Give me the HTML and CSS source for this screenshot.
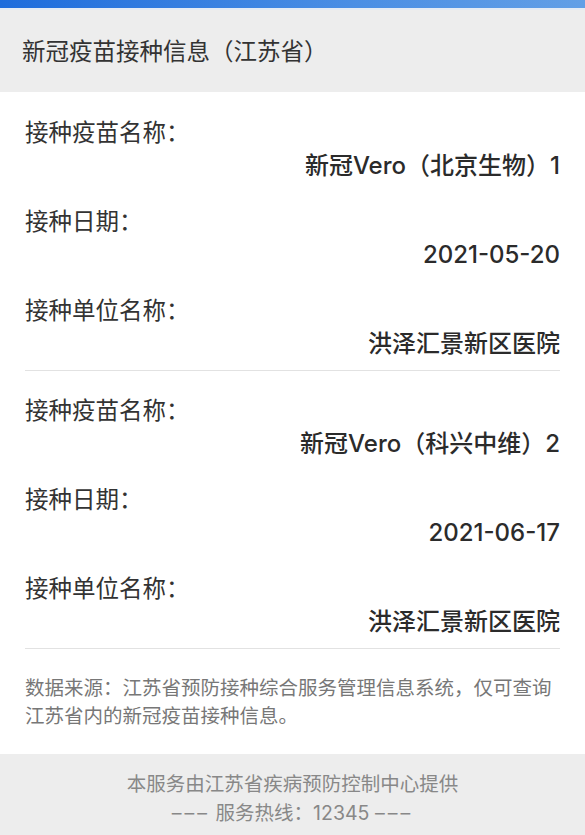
FILE: index.html
```html
<!DOCTYPE html>
<html lang="zh-CN">
  <head>
    <meta charset="UTF-8" />
    <meta name="viewport" content="width=device-width, initial-scale=1.0" />
    <title>新冠疫苗接种信息</title>
    <link rel="stylesheet" href="styles.css">
  </head>

  <body>
    <div class="topbar"></div>

    <header><h1>新冠疫苗接种信息（江苏省）</h1></header>

    <main>
      <section class="dose">
        <div class="item">
          <p class="label">接种疫苗名称：</p>
          <p class="value">新冠Vero（北京生物）1</p>
        </div>
        <div class="item">
          <p class="label">接种日期：</p>
          <p class="value">2021-05-20</p>
        </div>
        <div class="item">
          <p class="label">接种单位名称：</p>
          <p class="value">洪泽汇景新区医院</p>
        </div>
      </section>

      <section class="dose">
        <div class="item">
          <p class="label">接种疫苗名称：</p>
          <p class="value">新冠Vero（科兴中维）2</p>
        </div>
        <div class="item">
          <p class="label">接种日期：</p>
          <p class="value">2021-06-17</p>
        </div>
        <div class="item">
          <p class="label">接种单位名称：</p>
          <p class="value">洪泽汇景新区医院</p>
        </div>
      </section>

      <p class="note">数据来源：江苏省预防接种综合服务管理信息系统，仅可查询江苏省内的新冠疫苗接种信息。</p>
    </main>

    <footer>
      <p>本服务由江苏省疾病预防控制中心提供</p>
      <p><span class="dash">–––</span> 服务热线：12345 <span class="dash">–––</span></p>
    </footer>
  </body>
</html>
```

FILE: styles.css
```css
body {
  margin: 0;
  font-family: Inter, "Noto Sans CJK SC", sans-serif;
  background-color: #fff;
  color: #333;
}

p {
  margin: 0;
}

.topbar {
  height: 8px;
  background: linear-gradient(90deg, #1d6cdc, #4a8ee4 60%, #629fe6);
}

header {
  height: 84px;
  display: flex;
  align-items: center;
  padding: 0 22px 3px;
  background-color: #ededed;
  border-top: 2px solid #e4ebf4;
  box-sizing: border-box;
}

header h1 {
  margin: 0;
  font-size: 23.5px;
  font-weight: normal;
  color: #333;
}

main {
  padding: 1px 25px 0;
}

.dose {
  display: flex;
  flex-direction: column;
  gap: 23px;
  padding: 23px 0 10px;
  border-bottom: 1px solid #e2e2e2;
}

.label,
.value {
  font-size: 23.5px;
  line-height: 33px;
}

.label {
  color: #333;
}

.value {
  font-size: 24px;
  text-align: right;
  color: #2b2b2b;
  font-weight: 500;
}

.note {
  padding: 25px 0 24px;
  font-size: 19.5px;
  line-height: 28px;
  color: #777;
}

footer {
  background-color: #ededed;
  padding: 16px 0 30px;
  text-align: center;
  color: #888;
  font-size: 19.5px;
  line-height: 29px;
}

.dash {
  letter-spacing: 3px;
}
```
